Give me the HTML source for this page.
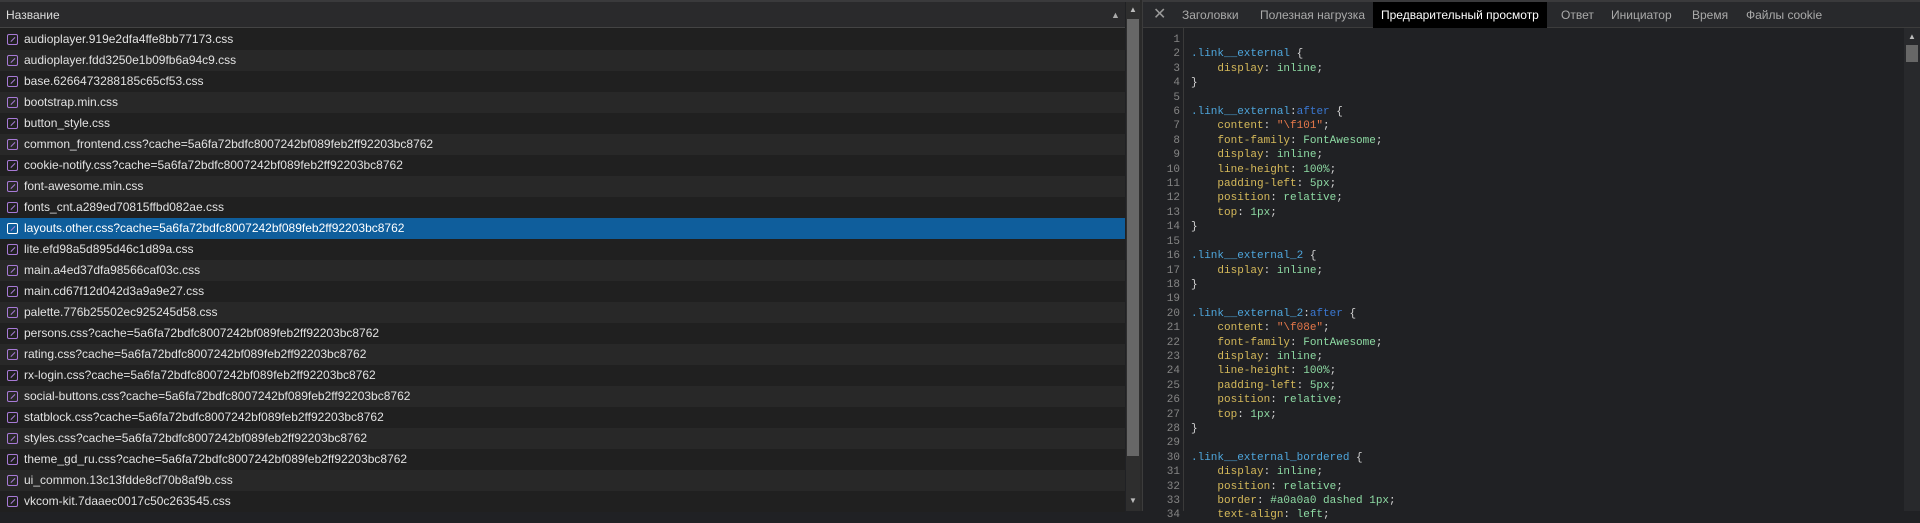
<!DOCTYPE html>
<html><head><meta charset="utf-8"><style>
*{margin:0;padding:0;box-sizing:border-box}
body{width:1920px;height:511px;background:#202124;overflow:hidden;position:relative;font-family:"Liberation Sans",sans-serif}
.topline{position:absolute;left:0;top:0;width:1920px;height:2px;background:#3a3a3c}
#left{position:absolute;left:0;top:2px;width:1125px;height:509px;background:#1f1f1f}
.hdr{position:absolute;left:0;top:0;width:1125px;height:26px;background:#2a2a2c;border-bottom:1px solid #444;color:#ddd;font-size:12px;line-height:26px;padding-left:6px}
.hdr .sa{position:absolute;left:1111px;top:0;color:#aaa;font-size:9px}
.rows{position:absolute;left:0;top:27px;width:1125px}
.r{height:21px;line-height:21px;font-size:12px;color:#e2e2e2;padding-left:24px;position:relative;white-space:nowrap}
.r:nth-child(odd){background:#202020}
.r:nth-child(even){background:#282828}
.r.sel{background:#0f5e9c;color:#fff}
.r i{position:absolute;left:7px;top:5px;width:11px;height:11px;border:1.5px solid #a77ad6;border-radius:2px}
.r i:after{content:"";position:absolute;left:1.5px;top:3.5px;width:6px;height:1.2px;background:#a77ad6;transform:rotate(-45deg)}
#lsb{position:absolute;left:1126px;top:2px;width:14px;height:509px;background:#2e2e2e}
#lsb .th{position:absolute;left:1px;top:17px;width:12px;height:437px;background:#676767}
.ar{position:absolute;color:#bbb;font-size:8px;width:14px;text-align:center}
#sep{position:absolute;left:1140px;top:0;width:3px;height:511px;background:#2a2a2a;border-right:1px solid #3c3c3c}
#tabs{position:absolute;left:1143px;top:2px;width:777px;height:26px;background:#28292c;border-bottom:1px solid #3c3c3c}
.t{position:absolute;top:0;height:26px;line-height:26px;font-size:12px;color:#aaa;white-space:nowrap}
.t.a{background:#000;color:#fff;padding:0 8px}
#code{position:absolute;left:1143px;top:28px;width:761px;height:483px;background:#202124}
.ln{position:absolute;left:0;top:5px;width:37px;text-align:right;color:#858585}
.gut{position:absolute;left:40px;top:0;width:1px;height:483px;background:#3a3a3a}
.src{position:absolute;left:48px;top:5px;color:#d4d4d4}
.ln,.src{font-family:"Liberation Mono",monospace;font-size:11px;line-height:14.4px;white-space:pre}
.s{color:#4ea6dc}.p{color:#d5b95a}.v{color:#8edba4}.st{color:#e6784a}.ps{color:#3a78d2}
#rsb{position:absolute;left:1904px;top:28px;width:16px;height:483px;background:#28292c}
#rsb .th{position:absolute;left:2px;top:17px;width:12px;height:17px;background:#676767}
</style></head><body>
<div class="topline"></div>
<div id="left">
<div class="hdr">Название<span class="sa">▲</span></div>
<div class="rows">
<div class="r"><i></i>audioplayer.919e2dfa4ffe8bb77173.css</div>
<div class="r"><i></i>audioplayer.fdd3250e1b09fb6a94c9.css</div>
<div class="r"><i></i>base.6266473288185c65cf53.css</div>
<div class="r"><i></i>bootstrap.min.css</div>
<div class="r"><i></i>button_style.css</div>
<div class="r"><i></i>common_frontend.css?cache=5a6fa72bdfc8007242bf089feb2ff92203bc8762</div>
<div class="r"><i></i>cookie-notify.css?cache=5a6fa72bdfc8007242bf089feb2ff92203bc8762</div>
<div class="r"><i></i>font-awesome.min.css</div>
<div class="r"><i></i>fonts_cnt.a289ed70815ffbd082ae.css</div>
<div class="r sel"><i style="border-color:#fff"></i>layouts.other.css?cache=5a6fa72bdfc8007242bf089feb2ff92203bc8762</div>
<div class="r"><i></i>lite.efd98a5d895d46c1d89a.css</div>
<div class="r"><i></i>main.a4ed37dfa98566caf03c.css</div>
<div class="r"><i></i>main.cd67f12d042d3a9a9e27.css</div>
<div class="r"><i></i>palette.776b25502ec925245d58.css</div>
<div class="r"><i></i>persons.css?cache=5a6fa72bdfc8007242bf089feb2ff92203bc8762</div>
<div class="r"><i></i>rating.css?cache=5a6fa72bdfc8007242bf089feb2ff92203bc8762</div>
<div class="r"><i></i>rx-login.css?cache=5a6fa72bdfc8007242bf089feb2ff92203bc8762</div>
<div class="r"><i></i>social-buttons.css?cache=5a6fa72bdfc8007242bf089feb2ff92203bc8762</div>
<div class="r"><i></i>statblock.css?cache=5a6fa72bdfc8007242bf089feb2ff92203bc8762</div>
<div class="r"><i></i>styles.css?cache=5a6fa72bdfc8007242bf089feb2ff92203bc8762</div>
<div class="r"><i></i>theme_gd_ru.css?cache=5a6fa72bdfc8007242bf089feb2ff92203bc8762</div>
<div class="r"><i></i>ui_common.13c13fdde8cf70b8af9b.css</div>
<div class="r"><i></i>vkcom-kit.7daaec0017c50c263545.css</div>
</div>
</div>
<div id="lsb"><div class="ar" style="top:3px">▲</div><div class="th"></div><div class="ar" style="top:494px">▼</div></div>
<div id="sep"></div>
<div id="tabs">
<div class="t" style="left:10px;color:#999;font-size:16px">✕</div>
<div class="t" style="left:39px">Заголовки</div>
<div class="t" style="left:117px">Полезная нагрузка</div>
<div class="t a" style="left:230px">Предварительный просмотр</div>
<div class="t" style="left:418px">Ответ</div>
<div class="t" style="left:468px">Инициатор</div>
<div class="t" style="left:549px">Время</div>
<div class="t" style="left:603px">Файлы cookie</div>
</div>
<div id="code">
<div class="ln">1
2
3
4
5
6
7
8
9
10
11
12
13
14
15
16
17
18
19
20
21
22
23
24
25
26
27
28
29
30
31
32
33
34</div>
<div class="gut"></div>
<div class="src">
<span class="s">.link__external</span> {
    <span class="p">display</span>: <span class="v">inline</span>;
}

<span class="s">.link__external</span>:<span class="ps">after</span> {
    <span class="p">content</span>: <span class="st">"\f101"</span>;
    <span class="p">font-family</span>: <span class="v">FontAwesome</span>;
    <span class="p">display</span>: <span class="v">inline</span>;
    <span class="p">line-height</span>: <span class="v">100%</span>;
    <span class="p">padding-left</span>: <span class="v">5px</span>;
    <span class="p">position</span>: <span class="v">relative</span>;
    <span class="p">top</span>: <span class="v">1px</span>;
}

<span class="s">.link__external_2</span> {
    <span class="p">display</span>: <span class="v">inline</span>;
}

<span class="s">.link__external_2</span>:<span class="ps">after</span> {
    <span class="p">content</span>: <span class="st">"\f08e"</span>;
    <span class="p">font-family</span>: <span class="v">FontAwesome</span>;
    <span class="p">display</span>: <span class="v">inline</span>;
    <span class="p">line-height</span>: <span class="v">100%</span>;
    <span class="p">padding-left</span>: <span class="v">5px</span>;
    <span class="p">position</span>: <span class="v">relative</span>;
    <span class="p">top</span>: <span class="v">1px</span>;
}

<span class="s">.link__external_bordered</span> {
    <span class="p">display</span>: <span class="v">inline</span>;
    <span class="p">position</span>: <span class="v">relative</span>;
    <span class="p">border</span>: <span class="v">#a0a0a0 dashed 1px</span>;
    <span class="p">text-align</span>: <span class="v">left</span>;</div>
</div>
<div id="rsb"><div class="ar" style="top:4px;left:1px">▲</div><div class="th"></div></div>
</body></html>
